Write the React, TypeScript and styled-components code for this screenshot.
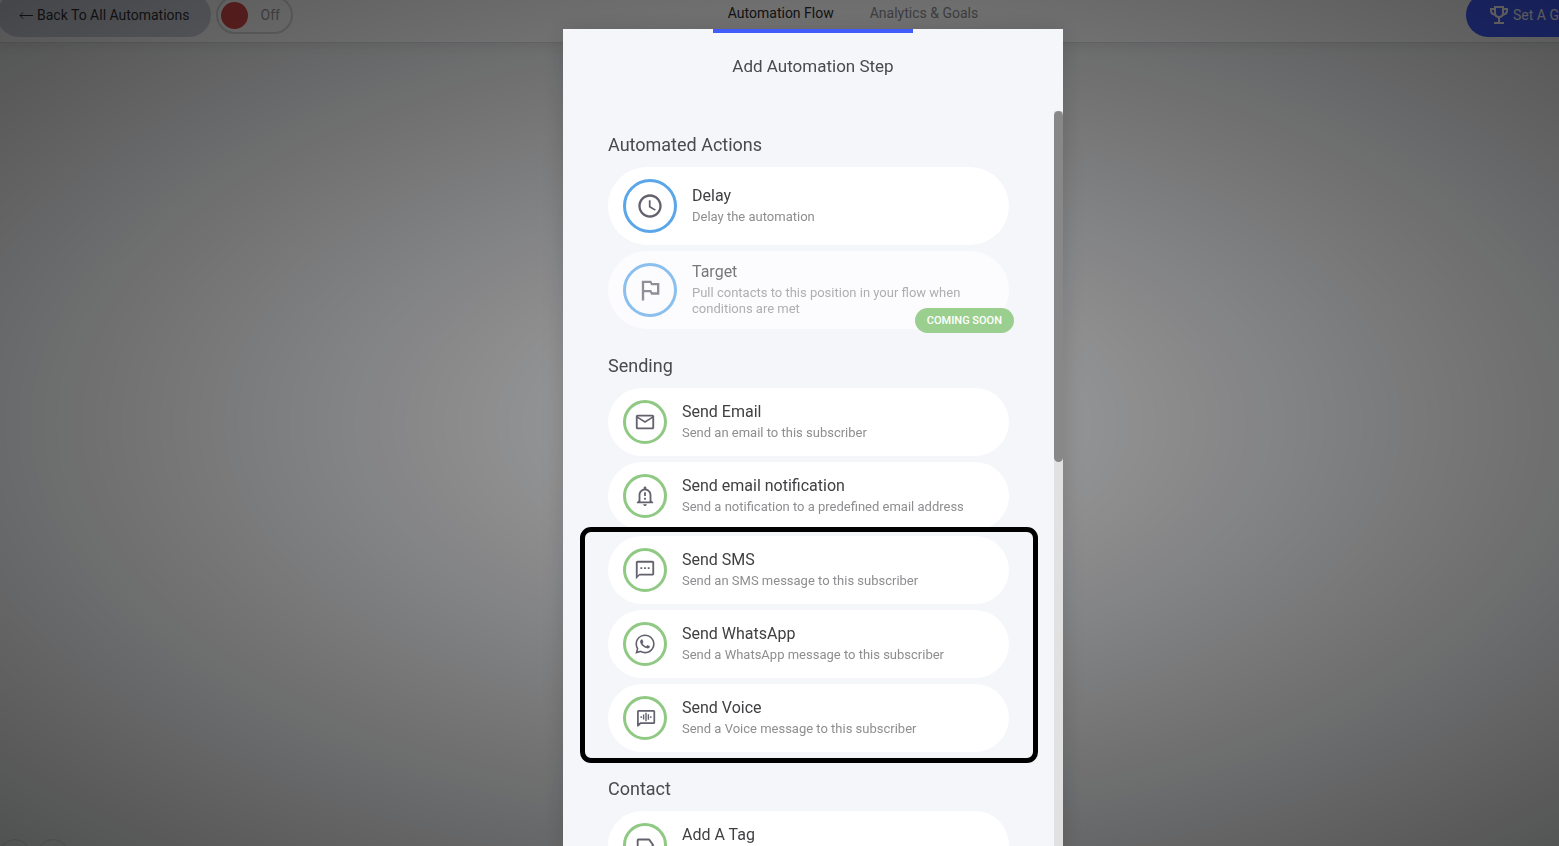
import React from "react";
import styled, { createGlobalStyle, css } from "styled-components";
import {
  MdAccessTime,
  MdMailOutline,
  MdOutlinedFlag,
  MdOutlineLabel,
  MdOutlineNotificationImportant,
  MdOutlineTextsms,
} from "react-icons/md";
import { FaWhatsapp } from "react-icons/fa";

const GlobalStyle = createGlobalStyle`
  *, *::before, *::after { box-sizing: border-box; }
  html, body, #root { height: 100%; }
  body {
    margin: 0;
    overflow: hidden;
    background: #f4f5f7;
    color: #3c3c43;
    font-family: Roboto, "Liberation Sans", sans-serif;
  }
  button { font-family: inherit; cursor: pointer; }
`;

const Shell = styled.div`
  display: flex;
  flex-direction: column;
  height: 100vh;
  margin-right: -67px;
`;

const Header = styled.header`
  position: relative;
  display: grid;
  grid-template-columns: 1fr auto 1fr;
  align-items: center;
  height: 55px;
  margin: -12px 0 0 -3px;
  background: #ffffff;
  border-bottom: 1px solid #dcdde0;
  box-shadow: 0 2px 12px rgba(0, 0, 0, 0.08);
`;

const HeaderSide = styled.div`
  display: flex;
  align-items: center;
  gap: 5px;
`;

const HeaderEnd = styled(HeaderSide)`
  justify-content: flex-end;
`;

const BackLink = styled.a`
  display: flex;
  align-items: center;
  gap: 4px;
  height: 44px;
  padding: 0 21px 0 22px;
  border-radius: 22px;
  background: #d0d3dc;
  color: #303034;
  font-size: 14px;
  text-decoration: none;
`;

const Switch = styled.label`
  display: flex;
  align-items: center;
  width: 77px;
  height: 38px;
  padding: 0 3px;
  gap: 13px;
  border: 2px solid #d8d8da;
  border-radius: 19px;
  color: #9a9aa0;
  font-size: 14px;
`;

const SwitchInput = styled.input`
  appearance: none;
  flex: none;
  width: 27px;
  height: 27px;
  margin: 0;
  border-radius: 50%;
  background: #d84a4a;
`;

const Tabs = styled.nav`
  display: flex;
  gap: 36px;
  margin-left: 83px;
  padding-bottom: 4px;
`;

const Tab = styled.a<{ $active?: boolean }>`
  color: ${(p) => (p.$active ? "#2c2c30" : "#8c8c92")};
  font-size: 14px;
  line-height: 20px;
  text-decoration: none;
`;

const GoalButton = styled.button`
  display: flex;
  align-items: center;
  gap: 2px;
  width: 160px;
  height: 44px;
  padding: 0 21px;
  border: 0;
  border-radius: 22px;
  background: #425cfb;
  color: #ffffff;
  font-size: 14px;
  white-space: nowrap;
`;

const Canvas = styled.main`
  flex: 1;
  display: flex;
  align-items: flex-end;
`;

const ZoomControls = styled.div`
  display: flex;
  gap: 6px;
  margin: 0 0 -25px -1px;
`;

const ZoomButton = styled.button`
  width: 32px;
  height: 32px;
  border: 1px solid #d9d9dc;
  border-radius: 50%;
  background: transparent;
`;

const Overlay = styled.div`
  position: fixed;
  inset: 0 -67px 0 0;
  display: flex;
  justify-content: center;
  padding-top: 29px;
  background: radial-gradient(ellipse at center, rgba(0, 0, 0, 0.32) 0%, rgba(0, 0, 0, 0.67) 100%);
`;

const Dialog = styled.section`
  display: flex;
  flex-direction: column;
  width: 500px;
  background: #f4f6fa;
  box-shadow: 0 2px 24px rgba(0, 0, 0, 0.16);
`;

const Progress = styled.div`
  align-self: center;
  width: 200px;
  height: 4px;
  background: #425cfb;
`;

const DialogTitle = styled.h1`
  margin: 0;
  padding: 21px 0 33px;
  text-align: center;
  font-size: 17px;
  line-height: 24px;
  font-weight: 400;
  color: #4a4a4d;
`;

const DialogBody = styled.div`
  flex: 1;
  display: flex;
  min-height: 0;
  overflow: hidden;
`;

const Sections = styled.div`
  flex: 1;
  display: flex;
  flex-direction: column;
  gap: 25px;
  padding: 22px 45px;
`;

const ScrollTrack = styled.div`
  width: 9px;
  background: #e1e1e1;
`;

const ScrollThumb = styled.div`
  height: 351px;
  border-radius: 5px;
  background: #888888;
`;

const Section = styled.section`
  display: flex;
  flex-direction: column;
  gap: 10px;
`;

const SectionTitle = styled.h2`
  margin: 0;
  font-size: 18px;
  line-height: 24px;
  font-weight: 400;
  color: #4a4a4d;
`;

const Steps = styled.div<{ $outlined?: boolean }>`
  position: relative;
  display: flex;
  flex-direction: column;
  gap: 6px;
  ${(p) =>
    p.$outlined &&
    css`
      &::after {
        content: "";
        position: absolute;
        inset: -9px -29px -11px -28px;
        border: 5px solid #000000;
        border-radius: 11px;
        pointer-events: none;
      }
    `}
`;

const StepCard = styled.button<{ $large?: boolean }>`
  position: relative;
  display: flex;
  align-items: center;
  gap: 15px;
  flex: none;
  height: ${(p) => (p.$large ? 78 : 68)}px;
  padding: 0 15px;
  border: 0;
  border-radius: 39px;
  background: #ffffff;
  text-align: left;
  &:disabled {
    background: #fcfcfe;
    cursor: default;
  }
`;

const StepIcon = styled.span<{ $color: string; $large?: boolean; $faded?: boolean }>`
  display: flex;
  align-items: center;
  justify-content: center;
  flex: none;
  width: ${(p) => (p.$large ? 54 : 44)}px;
  height: ${(p) => (p.$large ? 54 : 44)}px;
  border: 3px solid ${(p) => p.$color};
  border-radius: 50%;
  color: #62616d;
  font-size: ${(p) => (p.$large ? 28 : 22)}px;
  opacity: ${(p) => (p.$faded ? 0.7 : 1)};
`;

const StepText = styled.span<{ $faded?: boolean }>`
  display: flex;
  flex-direction: column;
  gap: 3px;
  padding-bottom: 1px;
  opacity: ${(p) => (p.$faded ? 0.7 : 1)};
`;

const StepName = styled.span`
  font-size: 16px;
  line-height: 20px;
  color: #404043;
`;

const StepInfo = styled.span`
  font-size: 13px;
  line-height: 16px;
  color: #8e8e91;
`;

const Badge = styled.span`
  position: absolute;
  right: -5px;
  bottom: -4px;
  padding: 0 12px;
  border-radius: 13px;
  background: #9bcf90;
  color: #ffffff;
  font-size: 11px;
  line-height: 25px;
  font-weight: 500;
`;

const BLUE = "#5ba6e8";
const GREEN = "#8fc983";

const VoiceIcon = () => (
  <svg width="1em" height="1em" viewBox="0 0 22 22" fill="none" stroke="currentColor">
    <path d="M3.900 18.500V4.500q0-.7.7-.7h15q.7 0 .7.7v11q0 .7-.7.7H6.500L3.900 18.800" strokeWidth="1.700" />
    <path d="M3.100 16h4L3.100 20z" fill="currentColor" stroke="none" />
    <path d="M7.200 9.200v1.800M9.600 7.600v5M12 5.800v8.400M14.400 7.200v5.600M16.800 9.200v1.800" strokeWidth="1.400" />
  </svg>
);

const TrophyIcon = () => (
  <svg width="24" height="24" viewBox="0 0 24 24" fill="none" stroke="currentColor" strokeWidth="2">
    <path d="M8 4h8v5.500c0 2.800-1.500 4.500-4 4.500s-4-1.700-4-4.500z" />
    <path d="M8 6H4v1.500c0 2.500 1.700 4 4.800 4.500M16 6h4v1.500c0 2.500-1.700 4-4.800 4.500" />
    <path d="M12 14v5M7 20h10" />
  </svg>
);

const ArrowLeft = () => (
  <svg width="14" height="10" viewBox="0 0 14 10" fill="none" stroke="currentColor" strokeWidth="1">
    <path d="M14 5.5H1M4 2.5L1 5.5L4 8.5" />
  </svg>
);

type StepProps = {
  icon: React.ReactNode;
  name: string;
  info: string;
  color?: string;
  large?: boolean;
  badge?: string;
};

const Step = ({ icon, name, info, color = GREEN, large, badge }: StepProps) => (
  <StepCard type="button" $large={large} disabled={!!badge}>
    <StepIcon $color={color} $large={large} $faded={!!badge}>
      {icon}
    </StepIcon>
    <StepText $faded={!!badge}>
      <StepName>{name}</StepName>
      <StepInfo>{info}</StepInfo>
    </StepText>
    {badge && <Badge>{badge}</Badge>}
  </StepCard>
);

export default function App() {
  return (
    <>
      <GlobalStyle />
      <Shell>
        <Header>
          <HeaderSide>
            <BackLink href="#automations">
              <ArrowLeft />
              Back To All Automations
            </BackLink>
            <Switch>
              <SwitchInput type="checkbox" />
              Off
            </Switch>
          </HeaderSide>
          <Tabs>
            <Tab href="#flow" $active>
              Automation Flow
            </Tab>
            <Tab href="#analytics">Analytics &amp; Goals</Tab>
          </Tabs>
          <HeaderEnd>
            <GoalButton type="button">
              <TrophyIcon />
              Set A Goal
            </GoalButton>
          </HeaderEnd>
        </Header>
        <Canvas>
          <ZoomControls>
            <ZoomButton type="button" aria-label="Zoom in" />
            <ZoomButton type="button" aria-label="Zoom out" />
          </ZoomControls>
        </Canvas>
      </Shell>
      <Overlay>
        <Dialog role="dialog" aria-modal="true" aria-labelledby="dialog-title">
          <Progress />
          <DialogTitle id="dialog-title">Add Automation Step</DialogTitle>
          <DialogBody>
            <Sections>
              <Section>
                <SectionTitle>Automated Actions</SectionTitle>
                <Steps>
                  <Step large color={BLUE} icon={<MdAccessTime />} name="Delay" info="Delay the automation" />
                  <Step
                    large
                    color={BLUE}
                    icon={<MdOutlinedFlag />}
                    name="Target"
                    info="Pull contacts to this position in your flow when conditions are met"
                    badge="COMING SOON"
                  />
                </Steps>
              </Section>
              <Section>
                <SectionTitle>Sending</SectionTitle>
                <Steps>
                  <Step icon={<MdMailOutline />} name="Send Email" info="Send an email to this subscriber" />
                  <Step
                    icon={<MdOutlineNotificationImportant />}
                    name="Send email notification"
                    info="Send a notification to a predefined email address"
                  />
                  <Steps $outlined>
                    <Step icon={<MdOutlineTextsms />} name="Send SMS" info="Send an SMS message to this subscriber" />
                    <Step
                      icon={<FaWhatsapp />}
                      name="Send WhatsApp"
                      info="Send a WhatsApp message to this subscriber"
                    />
                    <Step icon={<VoiceIcon />} name="Send Voice" info="Send a Voice message to this subscriber" />
                  </Steps>
                </Steps>
              </Section>
              <Section>
                <SectionTitle>Contact</SectionTitle>
                <Steps>
                  <Step icon={<MdOutlineLabel />} name="Add A Tag" info="Add a tag to this contact" />
                </Steps>
              </Section>
            </Sections>
            <ScrollTrack>
              <ScrollThumb />
            </ScrollTrack>
          </DialogBody>
        </Dialog>
      </Overlay>
    </>
  );
}
